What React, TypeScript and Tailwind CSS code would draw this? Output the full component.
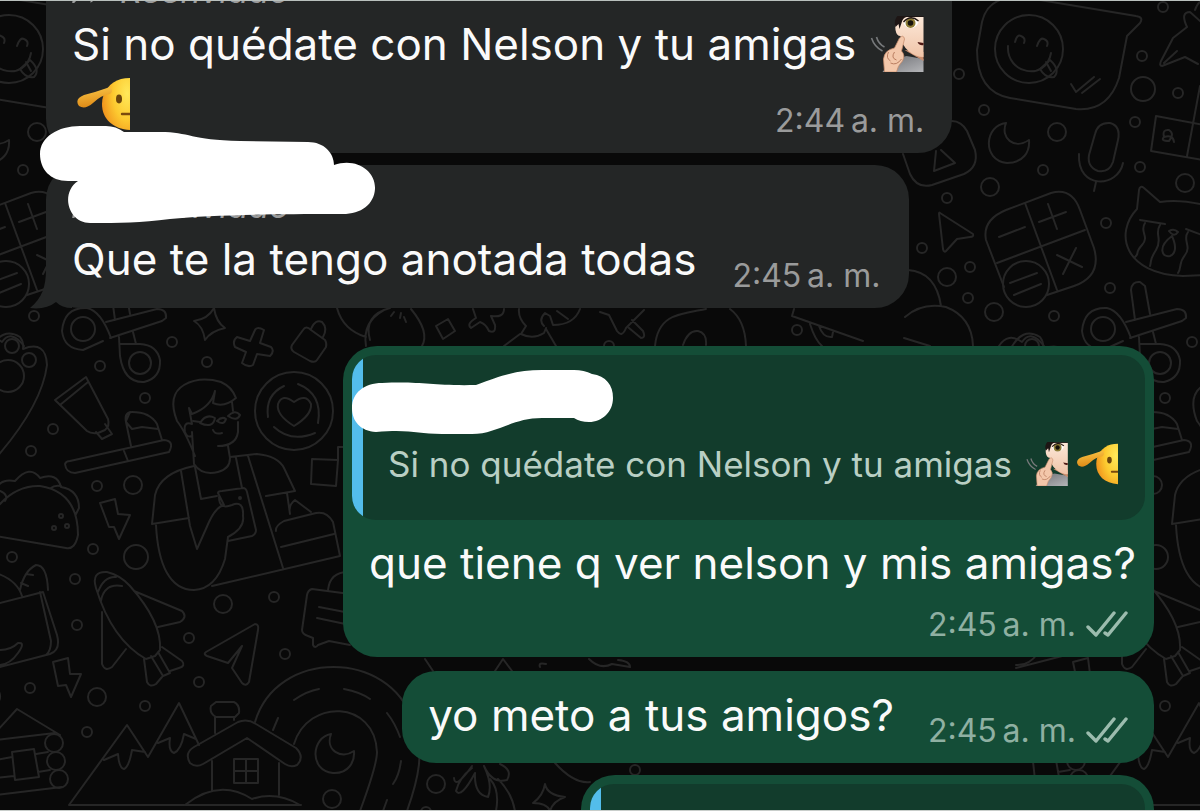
import React from 'react';

// x, y, radius
const dots = [
  [143, 7, 5], [122, 56, 5], [123, 89, 12], [158, 93, 5], [959, 74, 5], [984, 110, 5], [37, 132, 9],
  [115, 122, 5], [120, 167, 5], [165, 183, 9], [23, 170, 5], [990, 187, 9], [947, 198, 5], [922, 248, 5],
  [947, 277, 9], [970, 267, 5], [968, 298, 5], [994, 312, 9], [86, 223, 5], [90, 288, 5], [34, 316, 5],
  [172, 342, 5], [100, 366, 5], [207, 362, 5], [145, 398, 5], [53, 429, 5], [31, 451, 5], [97, 486, 5],
  [133, 485, 9], [93, 549, 5], [136, 557, 12], [12, 557, 5], [75, 579, 5], [223, 604, 9], [274, 597, 5],
  [77, 625, 5], [189, 638, 5], [285, 654, 5], [199, 682, 5], [30, 688, 5], [97, 697, 9], [145, 706, 5],
  [87, 732, 5], [332, 799, 9], [436, 784, 9], [635, 770, 5], [797, 330, 5], [609, 346, 5], [426, 812, 5],
];

const strokes = [
  // speech bubble with ticks
  'M1000 0Q986 5 982 22L977 50Q977 92 1010 98L1076 109Q1108 112 1119 78L1127 36L1140 23Q1144 17 1136 16L1040 0',
  'M1015 42Q1017 34 1021 36Q1026 38 1024 43M1037 46Q1040 37 1044 39Q1049 41 1047 46M1008 46C1006 74 1046 82 1051 53',
  'M1040 69L1050 60Q1061 70 1054 77Q1046 79 1040 69M1046 62L1051 71M1071 84L1076 92L1094 77M1082 93L1100 79',
  // moon
  'M1006 123C985 125 981 160 1007 163C1023 163 1030 152 1029 140C1014 150 1000 138 1006 123Z',
  // microphone
  'M75 134Q78 122 90 123Q101 126 98 140L93 162Q89 173 78 171Q67 167 69 155ZM59 154C57 190 98 188 103 163M76 182L74 191',
  // square badge
  'M903 154L910 174Q917 189 932 185L964 174Q979 167 975 150L967 131Q961 120 950 121M936 151L934 171L955 163L941 150',
  // calculator
  'M27 295L54 286Q82 276 74 248L60 210Q52 187 31 193L-14 210Q-38 220 -34 240L-16 287M5 203L37 290M-23 263L65 230',
  'M-21 237L5 227M19 222L46 212M28 204L37 229M37 255L62 267M56 248L43 274M-10 283L17 273M-6 295L21 284',
  // cursor
  'M940 213L973 234Q974 237 970 237L957 239L946 251Q944 253 943 249L939 214Q939 212 940 213',
  // cat
  'M184 205Q160 199 140 202L124 188Q120 185 119 190L117 209C94 233 104 274 163 276L184 275',
  'M120 220L145 224M125 223C119 232 130 236 122 245S120 253 115 257M140 225C134 234 143 239 136 250S132 259 130 266',
  'M149 231Q154 228 158 232Q154 238 149 231M152 236C137 247 142 258 150 256Q159 252 152 236M166 229L182 235M168 232C162 240 172 246 165 255S162 267 158 273',
  // nib
  'M178 64L165 57L142 66Q139 66 141 61L153 38L167 27M167 27Q160 12 170 12L190 30M144 63L157 51M175 10Q178 0 188 -2',
  // picture cards
  'M180 86L167 156M136 116L200 128M136 116L131 151L194 162M144 137Q142 129 149 130Q155 134 149 141Q140 141 144 137Q153 134 154 142',
  // pliers
  'M103 341L83 350Q64 349 62 331Q64 307 87 308Q101 311 111 338M106 322L157 309Q167 309 166 318L162 321L110 338M115 320L111 290Q112 281 120 282L125 286L130 314M119 337L120 356Q124 383 144 382Q161 378 160 360Q157 345 140 344L120 344M133 332L136 344',
  // sparkle and plus
  'M214 308Q216 322 225 328Q211 331 205 340Q203 326 194 321Q208 319 214 308Z',
  'M255 330Q257 326 264 330L260 343L271 347Q275 351 270 356L257 354L253 365Q248 368 242 363L246 352L235 347Q232 341 237 337L250 341Z',
  // padlock
  'M303 330Q306 325 311 330L325 340Q327 343 326 347L317 360Q315 363 310 361L294 352Q290 349 292 345ZM311 329Q315 319 322 322Q328 328 323 337',
  // map pin on the left edge
  'M-10 350Q2 326 20 337Q24 342 23 349Q46 340 47 365Q42 405 -4 458',
  // toothpaste
  'M55 400L86 377L108 419Q110 426 105 430L98 433Q91 434 87 431ZM60 405L88 382M105 424L112 434L102 439L96 432',
  // brush
  'M131 446L126 422Q124 412 132 412Q150 412 157 424L162 440M126 422L132 429L142 427L158 429M126 421L130 412M70 461L164 440Q175 441 169 452L75 473Q66 473 65 464Q66 461 70 461M124 451L128 461',
  // man with a phone
  'M195 456Q185 431 177 421Q167 395 184 385Q200 376 221 382Q232 387 236 398Q224 408 213 403L215 391Q211 407 192 414L189 408L192 424Q183 421 185 432Q187 438 192 436M192 432L194 464Q202 476 218 472Q230 469 230 458L228 446M218 446Q236 446 238 432L238 422M232 402L233 411M213 430Q215 435 222 433',
  'M200 423Q206 413 215 418Q213 429 200 423M217 421Q222 416 226 419Q224 426 217 421M228 416Q235 409 240 415Q237 422 228 416M200 422L193 421',
  'M194 466Q160 473 155 495L152 524L189 518M181 471L190 526L197 549L209 522Q216 507 224 505L218 493Q218 491 222 491L243 488Q246 488 247 492L256 530Q256 534 252 536L228 541M230 457L257 454Q278 456 284 468L295 491L266 496M248 456L283 568M236 458L242 488M195 467L201 499L217 496M156 525C158 565 170 590 194 590Q216 589 225 559L228 537Q245 528 243 516Q244 500 232 505Q219 510 219 497M212 586L340 556L333 522Q327 511 316 513L284 521Q275 526 276 531M281 547L334 534M287 493L290 514Q288 505 295 500L311 512',
  // coaster with a heart
  'M294 426Q276 415 278 404Q282 393 294 402Q306 393 311 404Q312 415 294 426ZM268 417Q265 395 284 386M298 384Q323 394 318 423M274 427Q291 443 315 433',
  // frames
  'M312 459L338 460L336 486L311 484ZM338 461L338 447L360 447',
  // taco
  'M-4 490Q0 478 15 481Q30 464 40 478Q57 472 61 487Q79 490 79 508L76 514M-8 514Q12 485 40 486Q78 492 78 535Q75 550 66 548L-4 536M0 491Q9 495 5 501M-2 506L5 499M61 486Q54 485 51 488',
  // lightning bolts
  'M100 503L115 499L118 514L130 515L119 539L114 527L109 527Z',
  'M53 662L68 658L70 674L81 674L71 697L66 685L58 686Z',
  // grocery bag
  'M-4 604L43 592L57 635Q61 650 50 654L-4 668M40 592L51 641Q51 651 46 655M20 590Q24 571 36 565Q47 565 48 590M26 574L33 575M21 583L28 586M-4 573Q17 580 22 596M-4 650Q10 651 18 643Q26 642 18 653Q9 666 -4 665',
  // rocket
  'M96 588Q91 571 107 572Q120 575 130 586Q162 622 160 650L155 656L146 659Q112 640 96 588ZM101 601Q104 583 122 586M98 592Q104 576 116 577M134 591L182 611Q188 617 180 622L158 627M102 612L102 664Q105 672 112 667L126 649M144 659L147 682Q150 688 156 684L162 677M151 656L163 676L170 673L158 652M162 647L182 661Q186 666 179 668L170 671',
  // paper plane
  'M206 652L255 624Q259 624 258 630L249 682Q246 687 242 683L232 668L242 646L228 663L207 656Q203 654 206 652Z',
  // chat note
  'M350 594L312 589Q308 590 307 595L302 630Q302 634 308 636L313 638L313 645Q315 649 318 645L329 641L350 645M319 607L350 613M317 618L350 625M328 590Q330 572 348 572',
  // stacked logs
  'M-4 740L55 733M-4 795L62 787M-4 732L17 709L60 735M12 752L34 749L39 777L15 780ZM36 754L48 752M38 772L50 770M-4 760L12 757M-4 778L14 776M-4 705Q3 698 -2 690',
  // mountains
  'M69 805L127 725L148 757L179 703L199 745M104 760L118 754Q119 768 124 769Q129 767 132 750L145 752M158 743L170 738Q168 751 174 753Q181 750 184 734L196 739M69 805L301 805',
  // cabin
  'M190 763Q184 753 194 747L238 722Q247 718 256 724L296 748Q305 757 297 765Q291 768 285 764L247 738L203 764Q196 768 190 763ZM212 761L212 791M279 763L279 795M234 759L258 759L258 783L234 783ZM246 759L246 783M234 771L258 771M185 805Q219 778 252 799Q276 791 300 805M215 733L215 717M234 720L234 717M216 717Q209 713 211 706L216 702L234 702Q240 705 239 713L235 717Z',
  // winding road
  'M255 722C277 648 390 650 412 720C426 750 418 780 407 811M294 744C308 698 375 700 377 752Q377 765 360 811M294 700Q307 691 319 689M344 689Q360 692 370 699M387 713Q395 723 400 737M401 761Q399 776 393 784M387 800L383 811M273 730L278 718',
  'M331 734C312 737 308 770 333 773C348 774 355 762 354 751C341 760 325 750 331 734Z',
  // things between the bubbles
  'M337 308Q343 330 366 337M366 346Q362 322 384 310M370 340Q363 315 390 308M411 309Q430 332 422 346M391 316L394 312M400 318L401 313M406 322L404 317M436 326L448 319L455 331L443 339Z',
  'M473 309L476 318Q466 324 471 328L480 322Q486 324 489 331Q496 334 495 325L491 316Q504 318 504 309M519 309Q518 318 526 326L521 334Q533 340 544 333L546 328M520 334L504 346M546 329L556 346M544 326Q538 320 545 313L550 316L553 325Q574 325 580 309M557 311L568 319',
  'M600 312L609 315L617 331Q622 338 626 328L644 310M629 328L641 338Q646 338 643 331L632 320M655 346C658 314 680 314 706 309M730 309Q745 320 746 346M683 345Q688 330 698 331Q707 333 706 345M794 309L792 316L863 341M810 324Q815 340 822 346M819 326Q823 338 832 337L833 332',
  'M425 659L433 671M495 671L503 659L512 671M540 667Q538 662 546 664M589 659Q600 670 612 664L630 667Q630 661 618 660M454 778Q455 790 472 766M472 768Q459 778 456 791Q461 799 475 773Q474 795 488 797Q493 785 484 766Q492 784 507 780Q513 770 500 764M490 779Q500 790 496 811M498 779Q512 793 515 811',
  'M545 784Q547 795 565 797Q553 801 550 811Q547 803 533 803Q543 796 545 784ZM555 763Q574 784 590 782M908 270Q936 272 941 306M905 317Q922 302 946 307Q972 317 973 346M904 338L930 346M999 346Q1008 332 1022 342Q1031 329 1044 346',
];

const rings = [
  [1029, 49, 34], [6, 284, 23], [1103, 329, 12], [140, 363, 11], [294, 411, 39], [12, 346, 7], [29, 360, 7],
  [8, 376, 16], [54, 743, 9], [56, 761, 9], [59, 779, 9], [61, 516, 2], [67, 526, 2], [54, 528, 2], [240, 498, 1],
];

const Doodles = () => (
  <svg className="absolute top-0 left-0" width="2040" height="811" fill="none" stroke="#262626" strokeWidth="2" strokeLinecap="round" strokeLinejoin="round" aria-hidden="true">
    <defs>
      <g id="doodle-tile">
        {dots.map(([x, y, r]) => (
          <circle key={`${x}-${y}`} cx={x} cy={y} r={r} />
        ))}
        {rings.map(([x, y, r]) => (
          <circle key={`${x}-${y}`} cx={x} cy={y} r={r} />
        ))}
        {strokes.map((d) => (
          <path key={d} d={d} />
        ))}
      </g>
    </defs>
    <use href="#doodle-tile" x="-1020" />
    <use href="#doodle-tile" />
    <use href="#doodle-tile" x="1020" />
  </svg>
);

const DeafEmoji = ({ className }: { className: string }) => (
  <svg className={className} viewBox="0 0 53 56" role="img" aria-label="persona sorda">
    <defs>
      <linearGradient id="skin" x1="0" y1="0" x2="0" y2="1">
        <stop offset="0" stopColor="#fce8d8" />
        <stop offset="1" stopColor="#f0c4a8" />
      </linearGradient>
      <linearGradient id="shirt" x1="0" y1="0" x2="1" y2="1">
        <stop offset="0" stopColor="#6c6d72" />
        <stop offset="1" stopColor="#b4b5b8" />
      </linearGradient>
    </defs>
    <path d="M12 56Q22 42 36 40L53 43V56Z" fill="url(#shirt)" />
    <path d="M34 34L53 45V36Z" fill="#c98d6e" />
    <path d="M28 6Q24 7 25 14Q26 20 30 20Q31 29 38 35Q45 41 53 41V1H32Q29 3 28 6Z" fill="url(#skin)" />
    <path d="M25 11Q23 4 27 0H53V1H36Q32 2 31 7L29 13L28 8Z" fill="#1d1514" />
    <path d="M33 7Q40 -1 48 6Q46 12 40 12Q35 12 33 7Z" fill="#fff" />
    <circle cx="40" cy="7" r="5" fill="#8d7b35" />
    <circle cx="40" cy="7" r="2.8" fill="#15110a" />
    <path d="M33 6Q40 -2 48 5" fill="none" stroke="#221714" strokeWidth="1.4" />
    <path d="M47 26L53 27V29Q49 30 47 26Z" fill="#4d1712" />
    <path d="M14 56L13 43Q14 34 24 32L29 22Q33 18 34 23L31 35Q35 39 32 45Q27 50 26 56Z" fill="#f3c7aa" stroke="#c98f70" strokeWidth="0.8" />
    <path d="M18 36Q15 42 20 45M24 36Q20 42 26 44M20 47Q26 50 31 43" fill="none" stroke="#b97d60" strokeWidth="1" />
    <path d="M1 22Q4 31 12 35M6 21Q8 28 14 31" fill="none" stroke="#77797b" strokeWidth="1.6" />
  </svg>
);

const SaluteEmoji = ({ className }: { className: string }) => (
  <svg className={className} viewBox="0 0 54 52" role="img" aria-label="cara saludando">
    <defs>
      <radialGradient id="face" cx="0.9" cy="0.3" r="1">
        <stop offset="0" stopColor="#ffe95a" />
        <stop offset="0.5" stopColor="#fdca30" />
        <stop offset="1" stopColor="#ee8a1a" />
      </radialGradient>
      <linearGradient id="hand" x1="0" y1="0" x2="0.2" y2="1">
        <stop offset="0" stopColor="#fbc94a" />
        <stop offset="1" stopColor="#df8b17" />
      </linearGradient>
    </defs>
    <path d="M54 0Q49 0 45 1C34 4 26 14 26 26C26 41 37 51 54 52Z" fill="url(#face)" />
    <path d="M34 9Q38 13 34 16Q25 17 17 25Q9 32 3 28Q-2 21 8 17Q20 14 34 9Z" fill="url(#hand)" />
    <ellipse cx="43" cy="21" rx="3" ry="4.4" fill="#6b450c" />
    <path d="M46 36H54" stroke="#7b4a0d" strokeWidth="2.4" strokeLinecap="round" />
  </svg>
);

const Ticks = () => (
  <svg className="h-7 w-[42px]" viewBox="0 0 42 28" fill="none" stroke="#9cbcae" strokeWidth="3.4" strokeLinecap="round" strokeLinejoin="round" role="img" aria-label="Entregado">
    <path d="M2 16L10 24L28 2M19 22L22 24L40 2" />
  </svg>
);

const Time = ({ value, sent = false }: { value: string; sent?: boolean }) => (
  <span className={`flex items-center gap-2.5 text-[32px] leading-9 whitespace-nowrap ${sent ? 'text-[#8fb0a2]' : 'text-[#9a9b9b]'}`}>
    <time>{value}{'\u2009'}a. m.</time>
    {sent && <Ticks />}
  </span>
);

const Forwarded = () => (
  <div className="flex h-[46px] items-center gap-3 text-[34px] leading-[46px] text-[#9a9b9b] italic">
    <svg className="h-6 w-9" viewBox="0 0 36 24" fill="none" stroke="currentColor" strokeWidth="3" aria-hidden="true">
      <path d="M2 22Q4 8 20 8V2L34 12L20 21V15Q8 15 2 22Z" />
    </svg>
    Reenviado
  </div>
);

const Quote = ({ children }: { children?: React.ReactNode }) => (
  <blockquote className="flex h-[165px] overflow-hidden rounded-3xl bg-[#123c2c]">
    <div className="w-[11px] shrink-0 bg-[#53bdeb]" />
    {children}
  </blockquote>
);

const App = () => (
  <main className="relative h-screen overflow-hidden bg-[#090909] font-['Inter',sans-serif] text-[44px] leading-[60px] text-[#fafafa]">
    <Doodles />
    <div className="relative -mt-[50px] flex flex-col px-[46px]">
      <article className="self-start rounded-[34px] bg-[#242626] pt-[18px] pr-7 pb-[14px] pl-[26px]">
        <Forwarded />
        <p className="flex items-center gap-[14px] whitespace-nowrap">
          Si no quédate con Nelson y tu amigas
          <DeafEmoji className="h-14 w-[54px] shrink-0" />
        </p>
        <div className="flex h-[65px] items-start justify-between">
          <SaluteEmoji className="mt-1 ml-1 h-[52px] w-[54px]" />
          <div className="self-end">
            <Time value="2:44" />
          </div>
        </div>
      </article>

      <article className="relative mt-3 self-start rounded-[34px] bg-[#242626] pt-[18px] pr-7 pb-[14px] pl-[26px]">
        <svg className="absolute -bottom-px -left-4 h-10 w-12" viewBox="0 0 48 40" fill="#242626" aria-hidden="true">
          <path d="M16 0C16 18 12 29 0 39Q16 41 26 33Q32 39 42 39V0Z" />
        </svg>
        <div className="relative">
          <Forwarded />
          <div className="flex h-[65px] items-start gap-9">
            <p className="whitespace-nowrap">Que te la tengo anotada todas</p>
            <div className="self-end">
              <Time value="2:45" />
            </div>
          </div>
        </div>
        <svg className="absolute -top-10 -left-1.5 h-[98px] w-[336px]" viewBox="0 0 336 98" fill="#fff" aria-hidden="true">
          <path d="M38 56H28C10 56 0 44 0 29C0 12 18 1 40 1H66Q76 1 84 7H120C150 7 150 15 200 16L268 17C284 17 294 28 294 40C316 32 336 46 335 64C334 80 320 90 300 89C220 89 170 90 130 94C100 98 80 98 50 98C28 98 20 68 38 56Z" />
        </svg>
      </article>

      <article className="mt-[38px] w-[811px] max-w-full self-end rounded-[34px] bg-[#144d37] p-[9px] pb-[14px]">
        <Quote>
          <div className="relative pt-[87px] pl-[25px]">
            <svg className="absolute top-3.5 -left-[11px] h-[66px] w-[262px]" viewBox="0 0 262 66" fill="#fff" aria-hidden="true">
              <path d="M24 63C8 62 0 52 0 39C0 24 12 14 30 14C70 12 78 17 124 16C150 6 166 1 190 1H222Q232 1 240 5C254 7 261 16 261 29C261 43 250 53 237 53Q228 53 222 49H190C160 49 145 65 120 65H90C64 65 60 60 24 63Z" />
            </svg>
            <div className="flex h-11 items-center text-[35px] leading-[44px] whitespace-nowrap text-[#b9cfc4]">
              Si no quédate con Nelson y tu amigas
              <DeafEmoji className="ml-[14px] h-11 w-[42px] shrink-0" />
              <SaluteEmoji className="ml-2 h-[42px] w-[42px] shrink-0" />
            </div>
          </div>
        </Quote>
        <p className="mt-[13px] px-[17px] whitespace-nowrap">que tiene q ver nelson y mis amigas?</p>
        <div className="mt-[14px] flex justify-end pr-[17px]">
          <Time value="2:45" sent />
        </div>
      </article>

      <article className="mt-[14px] flex self-end rounded-[34px] bg-[#144d37] px-[26px] py-[14px]">
        <p className="h-16 whitespace-nowrap">yo meto a tus amigos?</p>
        <div className="ml-[34px] self-end">
          <Time value="2:45" sent />
        </div>
      </article>

      <article className="mt-3 w-[573px] max-w-full self-end rounded-[34px] bg-[#144d37] p-[9px]">
        <Quote />
      </article>
    </div>
    <div className="absolute inset-x-0 top-0 h-px bg-[#b9c0bd]" />
    <div className="absolute inset-x-0 bottom-0 h-px bg-[#c9cecb]" />
  </main>
);

export default App;
